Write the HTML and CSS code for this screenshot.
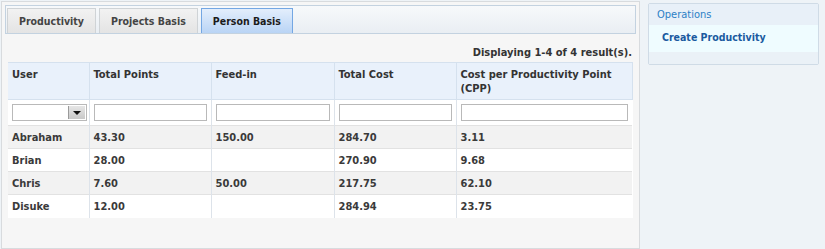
FILE: index.html
```html
<!DOCTYPE html>
<html>
<head>
<meta charset="utf-8">
<link rel="stylesheet" href="styles.css">
</head>
<body>
<div class="page">
  <div class="main">
    <div class="tabbar">
      <div class="tab">Productivity</div>
      <div class="tab">Projects Basis</div>
      <div class="tab active">Person Basis</div>
    </div>
    <div class="summary">Displaying 1-4 of 4 result(s).</div>
    <table class="grid">
      <colgroup>
        <col style="width:81px"><col style="width:122px"><col style="width:123px"><col style="width:122px"><col style="width:176px">
      </colgroup>
      <thead>
        <tr class="head">
          <th>User</th><th>Total Points</th><th>Feed-in</th><th>Total Cost</th><th>Cost per Productivity Point (CPP)</th>
        </tr>
        <tr class="filters">
          <td><div class="select"><span class="arrow"></span></div></td>
          <td><div class="input"></div></td>
          <td><div class="input"></div></td>
          <td><div class="input"></div></td>
          <td><div class="input"></div></td>
        </tr>
      </thead>
      <tbody>
        <tr class="odd"><td class="name">Abraham</td><td>43.30</td><td>150.00</td><td>284.70</td><td>3.11</td></tr>
        <tr><td class="name">Brian</td><td>28.00</td><td></td><td>270.90</td><td>9.68</td></tr>
        <tr class="odd"><td class="name">Chris</td><td>7.60</td><td>50.00</td><td>217.75</td><td>62.10</td></tr>
        <tr><td class="name">Disuke</td><td>12.00</td><td></td><td>284.94</td><td>23.75</td></tr>
      </tbody>
    </table>
  </div>
  <div class="side">
    <div class="side-head">Operations</div>
    <div class="side-link">Create Productivity</div>
    <div class="side-foot"></div>
  </div>
</div>
</body>
</html>
```
FILE: styles.css
```css
html, body {
  margin: 0;
  padding: 0;
  background: #eef3f7;
  font-family: "DejaVu Sans Condensed", "DejaVu Sans", sans-serif;
  font-size: 10.5px;
  color: #333;
}
.page {
  display: flex;
  align-items: flex-start;
  padding: 1px 0 0 1px;
  gap: 8px;
}
.main {
  width: 631px;
  height: 243px;
  background: #f6f6f6;
  border: 1px solid #d8dbde;
  padding: 3px 3px 0 3px;
  box-sizing: content-box;
  display: flex;
  flex-direction: column;
}
.tabbar {
  height: 27px;
  border: 1px solid #c3d2e0;
  background: linear-gradient(#f7f9fb, #e9eef3);
  display: flex;
  align-items: flex-end;
  padding: 0 0 0 1px;
  gap: 3px;
}
.tab {
  height: 25px;
  box-sizing: border-box;
  border: 1px solid #cfd3d6;
  border-bottom: none;
  background: linear-gradient(#f2f2f2, #e4e4e4);
  font-weight: bold;
  color: #444;
  padding: 0 11px;
  display: flex;
  align-items: center;
  font-size: 10.5px;
}
.tab.active {
  background: linear-gradient(#e3eefc, #b9d4f5);
  border: 1px solid #74a7e3;
  border-bottom: none;
  color: #1b1b1b;
}
.summary {
  text-align: right;
  font-weight: bold;
  padding: 12px 4px 0 0;
  height: 16px;
  color: #333;
  font-size: 11px;
}
.grid {
  margin-left: 3px;
  width: 624px;
  border-collapse: collapse;
  table-layout: fixed;
  background: #fff;
}
.grid th, .grid td {
  border-left: 1px solid #dde3ea;
  padding: 0 4px;
  text-align: left;
  font-weight: bold;
}
.grid th:first-child, .grid td:first-child { border-left: none; }
.head th {
  background: #e9f1fb;
  height: 37px;
  vertical-align: top;
  padding-top: 5px;
  box-sizing: border-box;
  border: 1px solid #d5e1ee;
  color: #333;
  line-height: 14px;
  font-size: 11px;
}
.filters td {
  height: 26px;
  box-sizing: border-box;
  background: #fff;
  padding: 0 4px;
}
.input {
  height: 15px;
  border: 1px solid #b9b9b9;
  background: #fff;
}
.select {
  height: 15px;
  border: 1px solid #b9b9b9;
  background: #fff;
  position: relative;
  margin-right: -2px;
}
.arrow {
  position: absolute;
  right: 1px;
  top: 1px;
  width: 16px;
  height: 13px;
  background: linear-gradient(#e6e6e6, #c8c8c8);
  border-left: 1px solid #9a9a9a;
}
.arrow::after {
  content: "";
  position: absolute;
  left: 4px;
  top: 5px;
  border-left: 4px solid transparent;
  border-right: 4px solid transparent;
  border-top: 4px solid #111;
}
tbody td {
  height: 23px;
  box-sizing: border-box;
  border-top: 1px solid #e2e2e2;
  color: #3a3a3a;
  font-size: 11px;
}
tbody tr.odd td { background: #f2f2f2; }
.side {
  margin-top: 2px;
  width: 169px;
  border: 1px solid #cfdbe6;
  border-radius: 2px;
  background: #eaf1f7;
}
.side-head {
  height: 21px;
  line-height: 22px;
  padding-left: 8px;
  color: #2b7fc6;
  font-size: 11px;
  background: #e8f0f8;
}
.side-link {
  height: 27px;
  line-height: 25px;
  padding-left: 13px;
  background: #effcff;
  color: #1a5aa0;
  font-weight: bold;
}
.side-foot {
  height: 12px;
  background: #eaf1f7;
}
```
